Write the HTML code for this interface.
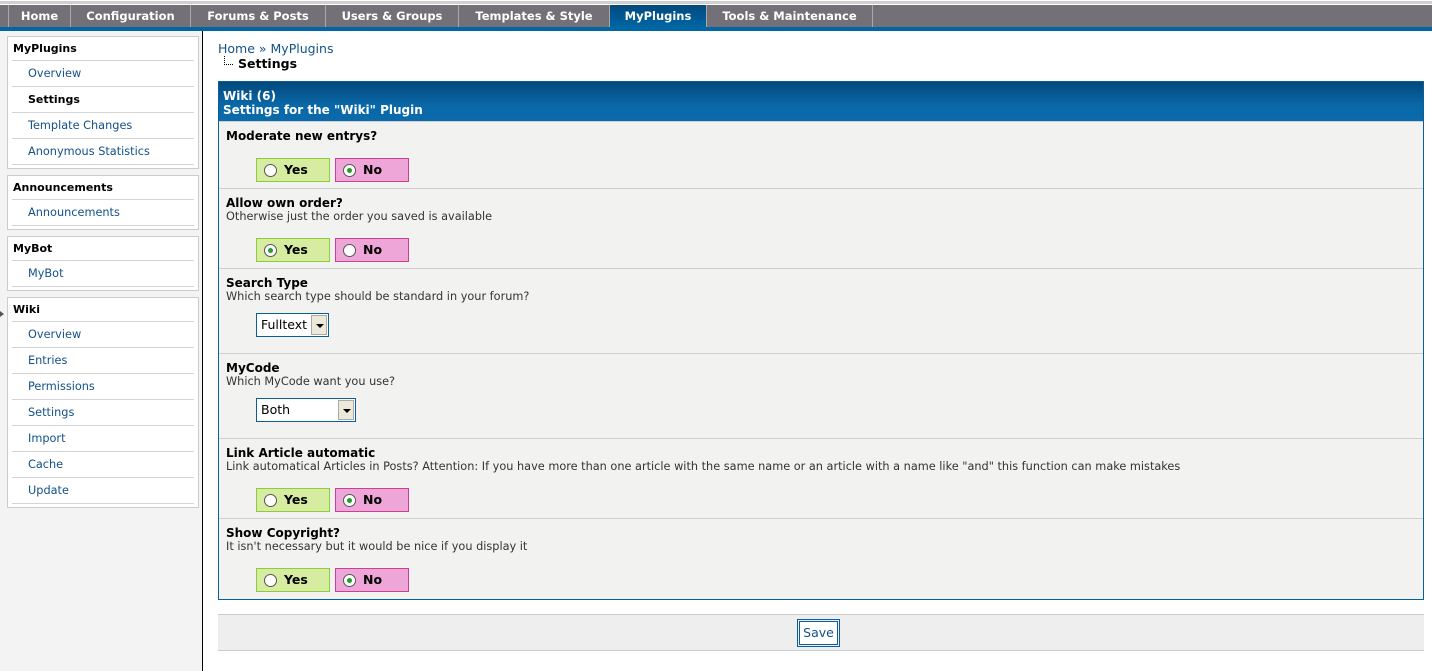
<!DOCTYPE html>
<html><head><meta charset="utf-8"><style>
*{box-sizing:border-box;margin:0;padding:0}
body{width:1432px;height:671px;overflow:hidden;background:#fff;font-family:"DejaVu Sans","Liberation Sans",sans-serif;font-size:11px;color:#000;position:relative}
.abs{position:absolute}
#topline{left:0;top:1px;width:1432px;height:3px;background:#d0d0d0}
#tabs{left:0;top:5px;width:1432px;height:22px;background:#737177}
.tab{position:absolute;top:5px;height:22px;line-height:22px;color:#fff;font-weight:bold;font-size:11.5px;text-align:center;border-right:1px solid #a8a8a8}
.tab.act{background:linear-gradient(#02487c,#0066a4)}
#strip{left:0;top:27px;width:1432px;height:4px;background:#0066a4}
#side{left:0;top:31px;width:203px;height:640px;background:#f3f3f3;border-right:1px solid #000}
.box{position:absolute;left:7px;width:192px;background:#fff;border:1px solid #ccc}
.box h3{font-size:11px;font-weight:bold;padding:5px 0 0 5px;height:23px;margin:0 4px 0 0}
.box .it{margin:0 4px 0 4px;border-top:1px solid #d4d4d4;height:26px;line-height:25px;padding-left:16px;color:#12518a;font-size:11.3px}
.box .it.b{color:#000;font-weight:bold;font-size:11px}
.box .last{margin:0 4px;border-top:1px solid #d4d4d4;height:4px}
#crumb{left:218px;top:41px;font-size:12.5px;color:#12518a}
#crumb2{left:238px;top:56px;font-size:12.5px;font-weight:bold}
#dots{left:224px;top:56px;width:9px;height:9px;border-left:1px dotted #000;border-bottom:1px dotted #000}
#tbl{left:218px;top:81px;width:1206px;height:519px;border:1px solid #0b5e97;background:#f2f3f1}
#hdr{left:0;top:0;width:1204px;height:39px;background:linear-gradient(#02487c,#0a68a8 60%,#0b6aab);color:#fff;font-weight:bold;font-size:12px;padding:7px 0 0 4px;line-height:14px}
.row{position:absolute;left:0;width:1204px;border-top:1px solid #cfcfcf;padding:7px 0 0 7px}
.row b{font-size:12px;display:block;line-height:14px}
.row .d{color:#333;line-height:14px;font-size:11.3px}
.rad{position:absolute;top:0;width:74px;height:24px;font-weight:bold;font-size:12.5px;line-height:22px;padding-left:27px}
.yes{background:#d6eca0;border:1px solid #8fcb3a}
.no{background:#eea5d8;border:1px solid #cd3f93}
.circ{position:absolute;left:7px;top:5px;width:13px;height:13px;border-radius:50%;border:1px solid #555;background:#fff}
.circ.on::after{content:"";position:absolute;left:3px;top:3px;width:5px;height:5px;border-radius:50%;background:#2a9a2a}
.sel{position:absolute;height:24px;border:1px solid #0b5e97;background:#fff;font-size:12.5px;line-height:22px;padding-left:4px}
.sel i{position:absolute;right:1px;top:1px;width:16px;height:20px;background:#ece9d8;border:1px solid #aaa}
.sel i::after{content:"";position:absolute;left:4px;top:8px;border-left:4px solid transparent;border-right:4px solid transparent;border-top:4px solid #000}
#save{left:218px;top:614px;width:1206px;height:37px;background:#eeeeee;border-top:1px solid #ccc;border-bottom:1px solid #ccc}
#btn{left:579px;top:4px;width:43px;height:28px;border:1px solid #0b5e97;padding:1px}
#btn div{border:1px solid #0b5e97;height:24px;line-height:22px;text-align:center;color:#12518a;font-size:12.5px;background:#fff}
</style></head><body>
<div class="abs" id="topline"></div>
<div class="abs" id="tabs"></div>
<div class="tab" style="left:8px;width:63px;border-left:1px solid #a8a8a8">Home</div>
<div class="tab" style="left:71px;width:120px">Configuration</div>
<div class="tab" style="left:191px;width:135px">Forums &amp; Posts</div>
<div class="tab" style="left:326px;width:133px">Users &amp; Groups</div>
<div class="tab" style="left:459px;width:151px">Templates &amp; Style</div>
<div class="tab act" style="left:610px;width:97px">MyPlugins</div>
<div class="tab" style="left:707px;width:166px">Tools &amp; Maintenance</div>
<div class="abs" id="strip"></div>
<div class="abs" id="side">
<div class="box" style="top:5px"><h3>MyPlugins</h3><div class="it">Overview</div><div class="it b">Settings</div><div class="it">Template Changes</div><div class="it">Anonymous Statistics</div><div class="last"></div></div>
<div class="box" style="top:144px"><h3>Announcements</h3><div class="it">Announcements</div><div class="last"></div></div>
<div class="box" style="top:205px"><h3>MyBot</h3><div class="it">MyBot</div><div class="last"></div></div>
<div class="box" style="top:266px"><h3>Wiki</h3><div class="it">Overview</div><div class="it">Entries</div><div class="it">Permissions</div><div class="it">Settings</div><div class="it">Import</div><div class="it">Cache</div><div class="it">Update</div><div class="last"></div></div>
</div>
<div class="abs" style="left:0;top:311px;border-top:3px solid transparent;border-bottom:3px solid transparent;border-left:4px solid #555"></div>
<div class="abs" id="crumb">Home » MyPlugins</div>
<div class="abs" id="dots"></div>
<div class="abs" id="crumb2">Settings</div>
<div class="abs" id="tbl">
<div class="abs" id="hdr">Wiki (6)<br>Settings for the "Wiki" Plugin</div>
<div class="row" style="top:39px;height:67px"><b>Moderate new entrys?</b>
<div class="rad yes" style="left:37px;top:36px"><span class="circ"></span>Yes</div><div class="rad no" style="left:116px;top:36px"><span class="circ on"></span>No</div></div>
<div class="row" style="top:106px;height:80px"><b>Allow own order?</b><div class="d">Otherwise just the order you saved is available</div>
<div class="rad yes" style="left:37px;top:49px"><span class="circ on"></span>Yes</div><div class="rad no" style="left:116px;top:49px"><span class="circ"></span>No</div></div>
<div class="row" style="top:186px;height:85px"><b>Search Type</b><div class="d">Which search type should be standard in your forum?</div>
<div class="sel" style="left:37px;top:44px;width:73px">Fulltext<i></i></div></div>
<div class="row" style="top:271px;height:85px"><b>MyCode</b><div class="d">Which MyCode want you use?</div>
<div class="sel" style="left:37px;top:44px;width:100px">Both<i></i></div></div>
<div class="row" style="top:356px;height:80px"><b>Link Article automatic</b><div class="d">Link automatical Articles in Posts? Attention: If you have more than one article with the same name or an article with a name like "and" this function can make mistakes</div>
<div class="rad yes" style="left:37px;top:49px"><span class="circ"></span>Yes</div><div class="rad no" style="left:116px;top:49px"><span class="circ on"></span>No</div></div>
<div class="row" style="top:436px;height:81px"><b>Show Copyright?</b><div class="d">It isn't necessary but it would be nice if you display it</div>
<div class="rad yes" style="left:37px;top:49px"><span class="circ"></span>Yes</div><div class="rad no" style="left:116px;top:49px"><span class="circ on"></span>No</div></div>
</div>
<div class="abs" id="save"><div class="abs" id="btn"><div>Save</div></div></div>
</body></html>
